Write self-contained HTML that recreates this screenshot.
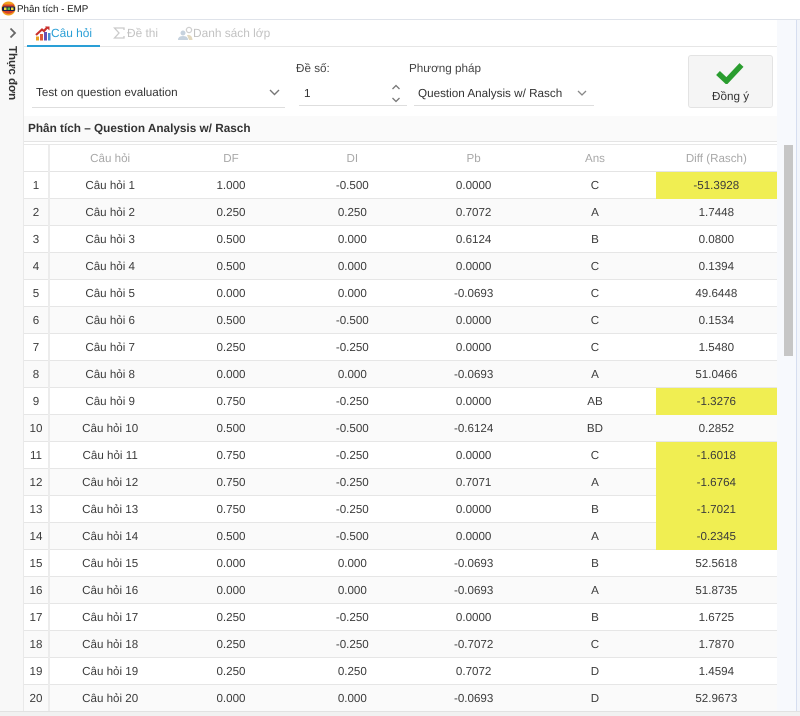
<!DOCTYPE html>
<html lang="vi">
<head>
<meta charset="utf-8">
<style>
html,body{margin:0;padding:0;width:800px;height:716px;overflow:hidden;background:#fff;font-family:"Liberation Sans","Noto Sans CJK SC",sans-serif;color:#333;font-size:11.7px;text-rendering:geometricPrecision}
.a{position:absolute}
.t{position:absolute;white-space:nowrap;line-height:16px}
table{position:absolute;left:24px;top:145px;width:753px;border-collapse:collapse;table-layout:fixed}
td,th{height:25px;padding:1px 0 0;border-bottom:1px solid #e6e6e6;text-align:center;font-weight:normal;font-size:11.6px;color:#3c3c3c;line-height:16px;overflow:hidden}
th{color:#a8a8a8;background:#fff;border-bottom:1px solid #e4e4e4}
td:first-child,th:first-child{border-right:2px solid #ececec}
tr:nth-child(even) td{background:#fafafa}
td.y,tr:nth-child(even) td.y{background:#f0ee52;border-bottom-color:#f0ee52}
</style>
</head>
<body>
<!-- window title -->
<div class="a" style="left:0;top:0;width:800px;height:19px;background:#fff;border-bottom:1px solid #dfe3ea"></div>
<svg class="a" style="left:1px;top:1px" width="15" height="15" viewBox="0 0 15 15">
<circle cx="7.500" cy="7.500" r="7" fill="#f2a01e"/>
<path d="M2 3.500H13V10.500Q7.500 15 2 10.500Z" fill="#d8432a"/>
<rect x="1" y="5.500" width="13" height="4.500" rx="1" fill="#15204d"/>
<rect x="3" y="6.500" width="2.500" height="2.500" fill="#ece13b"/>
<rect x="6.500" y="6.500" width="2.500" height="2.500" fill="#58b947"/>
<rect x="10" y="6.500" width="2.500" height="2.500" fill="#ece13b"/>
</svg>
<div class="t" style="left:17px;top:2px;font-size:9.800px;color:#222">Phân tích - EMP</div>

<!-- left rail -->
<div class="a" style="left:0;top:20px;width:23px;height:691px;background:#f8f8f8;border-right:1px solid #e9e9e9"></div>
<svg class="a" style="left:8px;top:27px" width="10" height="12" viewBox="0 0 10 12"><path d="M2.500 1.500L7 6L2.500 10.500" fill="none" stroke="#666" stroke-width="1.800"/></svg>
<div class="t" style="left:4px;top:46px;font-size:11.500px;font-weight:bold;color:#333;writing-mode:vertical-rl;line-height:16px">Thực đơn</div>

<!-- right gutter -->
<div class="a" style="left:777px;top:20px;width:19px;height:691px;background:#f7f9fd"></div>
<div class="a" style="left:796px;top:20px;width:1px;height:691px;background:#d6def0"></div>
<div class="a" style="left:797px;top:20px;width:3px;height:691px;background:#f2f5fb"></div>
<div class="a" style="left:784px;top:145px;width:9px;height:211px;background:#c6c6c6"></div>

<!-- tabs -->
<div class="a" style="left:24px;top:46px;width:753px;height:1px;background:#e6e6e6"></div>
<div class="a" style="left:27px;top:45px;width:73px;height:2px;background:#2a9fd6"></div>
<svg class="a" style="left:35px;top:26px" width="16" height="15" viewBox="0 0 16 15">
<rect x="1" y="10.500" width="3" height="4" fill="#e8a020"/>
<rect x="5" y="8" width="3" height="6.500" fill="#e05a3a"/>
<rect x="9" y="6" width="3" height="8.500" fill="#6a4fb4"/>
<rect x="13" y="7" width="2.500" height="7.500" fill="#4a8fd4"/>
<path d="M1 9L7 3.500L9 5L12.500 1" fill="none" stroke="#c9302c" stroke-width="2.200"/>
<path d="M10 .5H14.500V4.500Z" fill="#c9302c"/>
</svg>
<div class="t" style="left:51px;top:25px;font-size:11.900px;color:#2a9fd6">Câu hỏi</div>
<svg class="a" style="left:113px;top:27px" width="12" height="12" viewBox="0 0 12 12"><path d="M11 3V1H1.500L6 6L1.500 11H11V9" fill="none" stroke="#cacaca" stroke-width="1.300"/></svg>
<div class="t" style="left:127px;top:25px;font-size:11.900px;color:#c2c2c2">Đề thi</div>
<svg class="a" style="left:177px;top:26px" width="16" height="15" viewBox="0 0 16 15">
<circle cx="12" cy="4" r="2.600" fill="none" stroke="#cfcfcf" stroke-width="1.300"/>
<circle cx="6" cy="7" r="2.500" fill="#c6d2de"/>
<path d="M1 14Q1 10 6 10Q11 10 11 14Z" fill="#c6d2de"/>
<path d="M10 9Q15 8 15.500 14H12Z" fill="#e3d9bf"/>
</svg>
<div class="t" style="left:193px;top:25px;font-size:11.900px;color:#c2c2c2">Danh sách lớp</div>

<!-- form row -->
<div class="t" style="left:36px;top:85px;color:#333">Test on question evaluation</div>
<svg class="a" style="left:268px;top:88px" width="13" height="9" viewBox="0 0 13 9"><path d="M2 2L6.500 6.500L11 2" fill="none" stroke="#777" stroke-width="1.400"/></svg>
<div class="a" style="left:32px;top:107px;width:253px;height:1px;background:#dedede"></div>

<div class="t" style="left:296px;top:61px;color:#444">Đề số:</div>
<div class="t" style="left:304px;top:86px;color:#333">1</div>
<svg class="a" style="left:390px;top:83px" width="12" height="21" viewBox="0 0 12 21">
<path d="M2.500 6L6 2.500L9.500 6" fill="none" stroke="#777" stroke-width="1.300"/>
<path d="M2.500 15L6 18.500L9.500 15" fill="none" stroke="#777" stroke-width="1.300"/>
</svg>
<div class="a" style="left:299px;top:105px;width:108px;height:1px;background:#dedede"></div>

<div class="t" style="left:409px;top:61px;color:#444">Phương pháp</div>
<div class="t" style="left:418px;top:86px;color:#333">Question Analysis w/ Rasch</div>
<svg class="a" style="left:576px;top:89px" width="12" height="9" viewBox="0 0 12 9"><path d="M2 2L6 6L10 2" fill="none" stroke="#888" stroke-width="1.300"/></svg>
<div class="a" style="left:414px;top:105px;width:180px;height:1px;background:#dedede"></div>

<!-- confirm button -->
<div class="a" style="left:688px;top:55px;width:83px;height:51px;background:#f5f5f5;border:1px solid #e3e3e3;border-radius:3px"></div>
<svg class="a" style="left:716px;top:62px" width="28" height="22" viewBox="0 0 28 22"><path d="M2 11L10.500 19L25.500 3" fill="none" stroke="#2a9d2f" stroke-width="5.500"/></svg>
<div class="t" style="left:712px;top:89px;font-size:11.700px;color:#333">Đồng ý</div>

<!-- section heading -->
<div class="a" style="left:24px;top:116px;width:753px;height:25px;background:#fafafa;border-bottom:1px solid #e4e4e4"></div>
<div class="t" style="left:28px;top:121px;font-size:11.770px;font-weight:bold;color:#333">Phân tích – Question Analysis w/ Rasch</div>

<!-- data table -->
<div class="a" style="left:24px;top:144px;width:753px;height:1px;background:#e8e8e8"></div>
<table>
<colgroup><col style="width:25px"><col span="6" style="width:121.330px"></colgroup>
<thead><tr><th></th><th>Câu hỏi</th><th>DF</th><th>DI</th><th>Pb</th><th>Ans</th><th>Diff (Rasch)</th></tr></thead>
<tbody>
<tr><td>1</td><td>Câu hỏi 1</td><td>1.000</td><td>-0.500</td><td>0.0000</td><td>C</td><td class="y">-51.3928</td></tr>
<tr><td>2</td><td>Câu hỏi 2</td><td>0.250</td><td>0.250</td><td>0.7072</td><td>A</td><td>1.7448</td></tr>
<tr><td>3</td><td>Câu hỏi 3</td><td>0.500</td><td>0.000</td><td>0.6124</td><td>B</td><td>0.0800</td></tr>
<tr><td>4</td><td>Câu hỏi 4</td><td>0.500</td><td>0.000</td><td>0.0000</td><td>C</td><td>0.1394</td></tr>
<tr><td>5</td><td>Câu hỏi 5</td><td>0.000</td><td>0.000</td><td>-0.0693</td><td>C</td><td>49.6448</td></tr>
<tr><td>6</td><td>Câu hỏi 6</td><td>0.500</td><td>-0.500</td><td>0.0000</td><td>C</td><td>0.1534</td></tr>
<tr><td>7</td><td>Câu hỏi 7</td><td>0.250</td><td>-0.250</td><td>0.0000</td><td>C</td><td>1.5480</td></tr>
<tr><td>8</td><td>Câu hỏi 8</td><td>0.000</td><td>0.000</td><td>-0.0693</td><td>A</td><td>51.0466</td></tr>
<tr><td>9</td><td>Câu hỏi 9</td><td>0.750</td><td>-0.250</td><td>0.0000</td><td>AB</td><td class="y">-1.3276</td></tr>
<tr><td>10</td><td>Câu hỏi 10</td><td>0.500</td><td>-0.500</td><td>-0.6124</td><td>BD</td><td>0.2852</td></tr>
<tr><td>11</td><td>Câu hỏi 11</td><td>0.750</td><td>-0.250</td><td>0.0000</td><td>C</td><td class="y">-1.6018</td></tr>
<tr><td>12</td><td>Câu hỏi 12</td><td>0.750</td><td>-0.250</td><td>0.7071</td><td>A</td><td class="y">-1.6764</td></tr>
<tr><td>13</td><td>Câu hỏi 13</td><td>0.750</td><td>-0.250</td><td>0.0000</td><td>B</td><td class="y">-1.7021</td></tr>
<tr><td>14</td><td>Câu hỏi 14</td><td>0.500</td><td>-0.500</td><td>0.0000</td><td>A</td><td class="y">-0.2345</td></tr>
<tr><td>15</td><td>Câu hỏi 15</td><td>0.000</td><td>0.000</td><td>-0.0693</td><td>B</td><td>52.5618</td></tr>
<tr><td>16</td><td>Câu hỏi 16</td><td>0.000</td><td>0.000</td><td>-0.0693</td><td>A</td><td>51.8735</td></tr>
<tr><td>17</td><td>Câu hỏi 17</td><td>0.250</td><td>-0.250</td><td>0.0000</td><td>B</td><td>1.6725</td></tr>
<tr><td>18</td><td>Câu hỏi 18</td><td>0.250</td><td>-0.250</td><td>-0.7072</td><td>C</td><td>1.7870</td></tr>
<tr><td>19</td><td>Câu hỏi 19</td><td>0.250</td><td>0.250</td><td>0.7072</td><td>D</td><td>1.4594</td></tr>
<tr><td>20</td><td>Câu hỏi 20</td><td>0.000</td><td>0.000</td><td>-0.0693</td><td>D</td><td>52.9673</td></tr>
</tbody>
</table>

<!-- bottom strip -->
<div class="a" style="left:0;top:711px;width:800px;height:5px;background:#f1f1f1;border-top:1px solid #e2e2e2;box-sizing:border-box"></div>
</body>
</html>
